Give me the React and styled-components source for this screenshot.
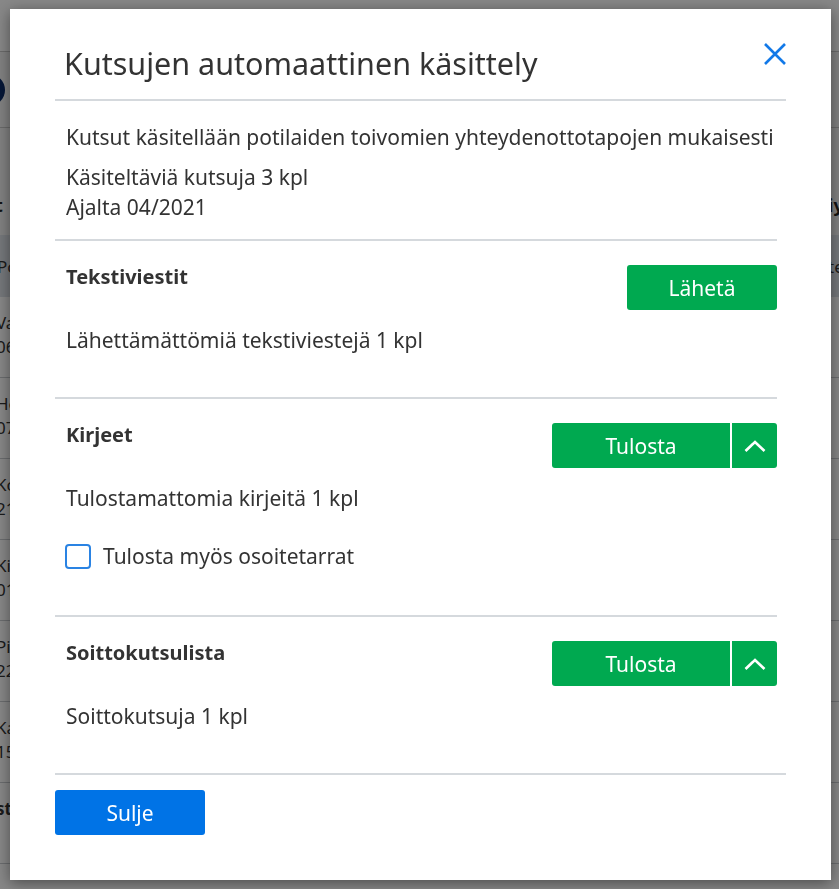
import React from "react";
import styled, { createGlobalStyle } from "styled-components";

const Global = createGlobalStyle`
  html, body { margin: 0; padding: 0; }
  body {
    font-family: "Noto Sans", "Open Sans", sans-serif;
    color: #333;
    background: #fff;
    overflow: hidden;
  }
  * { box-sizing: border-box; }
`;

/* ---------- background page (behind overlay) ---------- */
const Page = styled.div`
  width: 839px;
  height: 889px;
  overflow: hidden;
  background: #fff;
  display: flex;
  flex-direction: column;
`;
const TopBar = styled.div`
  height: 52px;
  flex: none;
  background: #fff;
  border-bottom: 1px solid #c8c8c8;
`;
const SubHeader = styled.div`
  height: 76px;
  flex: none;
  background: #f4f4f4;
  border-bottom: 1px solid #c8c8c8;
  display: flex;
  align-items: center;
`;
const Avatar = styled.div`
  width: 32px;
  height: 32px;
  border-radius: 50%;
  background: #0b2a66;
  margin-left: -27px;
`;
const TitleRow = styled.div`
  height: 107px;
  flex: none;
  background: #f4f4f4;
  display: grid;
  grid-template-columns: 828px 1fr;
  align-items: end;
  padding-bottom: 18px;
  font-weight: 700;
  font-size: 18px;
  color: #222;
`;
const Band = styled.div`
  height: 62px;
  flex: none;
  background: #dde2e8;
  display: grid;
  grid-template-columns: 828px 1fr;
  align-items: center;
  font-size: 17px;
  color: #333;
`;
const Row = styled.div`
  height: 81px;
  flex: none;
  border-bottom: 1px solid #c9ccd0;
  display: grid;
  grid-template-columns: 828px 1fr;
  padding-top: 14px;
  font-size: 17px;
  line-height: 24px;
  color: #333;
`;
const LeftCell = styled.div`
  margin-left: ${(p) => p.$shift || -4}px;
  width: 20px;
  overflow: hidden;
  white-space: nowrap;
  font-weight: ${(p) => (p.$bold ? 700 : 400)};
`;
const RightCell = styled.div`
  white-space: nowrap;
`;

/* ---------- overlay & modal ---------- */
const Overlay = styled.div`
  position: fixed;
  inset: 0;
  background: rgba(0, 0, 0, 0.47);
  display: flex;
  align-items: flex-start;
  padding: 9px 0 0 10px;
`;
const Modal = styled.div`
  width: 821px;
  background: #fff;
  box-shadow: 0 3px 14px rgba(0, 0, 0, 0.45);
  padding: 0 45px;
  display: flex;
  flex-direction: column;
`;
const Header = styled.div`
  display: flex;
  justify-content: space-between;
  align-items: flex-start;
  padding: 34px 0 16px 9px;
  border-bottom: 2px solid #d5d9dd;
`;
const Title = styled.h1`
  margin: 0;
  font-weight: 400;
  font-size: 30.5px;
  line-height: 40px;
  color: #333;
`;
const CloseBtn = styled.button`
  border: 0;
  background: none;
  padding: 0;
  width: 22px;
  height: 22px;
  display: flex;
  cursor: pointer;
`;
const Body = styled.div`
  margin-right: 9px;
  display: flex;
  flex-direction: column;
`;
const Intro = styled.div`
  padding: 21px 0 17px 11px;
  font-size: 21px;
  line-height: 30px;
  white-space: nowrap;
`;
const Para = styled.p`
  margin: 0 0 ${(p) => p.$mb || 0}px;
`;
const Section = styled.section`
  border-top: 2px solid #d5d9dd;
  padding: 24px 0 ${(p) => p.$pb || 45}px 11px;
  font-size: 21px;
`;
const SectionHead = styled.div`
  display: flex;
  justify-content: space-between;
  align-items: flex-start;
`;
const SectionTitle = styled.h2`
  margin: 0;
  font-size: 20px;
  font-weight: 700;
  line-height: 24px;
  color: #333;
`;
const Info = styled.p`
  margin: 18px 0 0;
  line-height: 24px;
`;
const GreenBtn = styled.button`
  height: 45px;
  width: ${(p) => p.$w}px;
  border: 0;
  background: #00a950;
  color: #fff;
  font-family: inherit;
  font-size: 21px;
  border-radius: ${(p) => p.$radius || "3px"};
  display: flex;
  align-items: center;
  justify-content: center;
  padding: 0;
  cursor: pointer;
`;
const Split = styled.div`
  display: flex;
  gap: 2px;
`;
const CheckRow = styled.label`
  display: flex;
  align-items: center;
  gap: 12px;
  margin-top: 33px;
  margin-left: -1px;
  line-height: 26px;
`;
const Box = styled.span`
  width: 26px;
  height: 25px;
  border: 2px solid #2a83e3;
  border-radius: 4px;
  background: #fff;
  flex: none;
`;
const Footer = styled.div`
  border-top: 2px solid #d5d9dd;
  padding: 15px 0 45px;
`;
const BlueBtn = styled.button`
  width: 150px;
  height: 45px;
  border: 0;
  border-radius: 3px;
  background: #0073e6;
  color: #fff;
  font-family: inherit;
  font-size: 21px;
  padding: 0;
  cursor: pointer;
`;

const Chevron = () => (
  <svg width="22" height="12" viewBox="0 0 22 12" fill="none">
    <path d="M1.5 11 L11 2 L20.5 11" stroke="#fff" strokeWidth="2.6" />
  </svg>
);

const CloseIcon = () => (
  <svg width="22" height="22" viewBox="0 0 22 22" fill="none">
    <path d="M1 1 L21 21 M21 1 L1 21" stroke="#1279e8" strokeWidth="2.6" />
  </svg>
);

const rows = [
  ["Valtonen Aino", "060578-1234"],
  ["Heikkinen Jari", "070481-2345"],
  ["Korhonen Liisa", "211266-3456"],
  ["Kivelä Matti", "010190-4567"],
  ["Pitkänen Sanna", "220374-5678"],
  ["Karjalainen Ilkka", "150859-6789"],
  ["stenberg", ""],
];

export default function App() {
  return (
    <>
      <Global />
      <Page>
        <TopBar />
        <SubHeader>
          <Avatar />
        </SubHeader>
        <TitleRow>
          <LeftCell $bold $shift={-5}>t</LeftCell>
          <RightCell>iy</RightCell>
        </TitleRow>
        <Band>
          <LeftCell $shift={-3}>Potilas</LeftCell>
          <RightCell>te</RightCell>
        </Band>
        {rows.map(([a, b], i) => (
          <Row key={i}>
            <LeftCell $bold={i === 6}>
              {a}
              <br />
              {b}
            </LeftCell>
            <RightCell />
          </Row>
        ))}
      </Page>
      <Overlay>
        <Modal role="dialog">
          <Header>
            <Title>Kutsujen automaattinen käsittely</Title>
            <CloseBtn aria-label="Sulje">
              <CloseIcon />
            </CloseBtn>
          </Header>
          <Body>
            <Intro>
              <Para $mb={10}>Kutsut käsitellään potilaiden toivomien yhteydenottotapojen mukaisesti</Para>
              <Para>Käsiteltäviä kutsuja 3 kpl</Para>
              <Para>Ajalta 04/2021</Para>
            </Intro>
            <Section>
              <SectionHead>
                <SectionTitle>Tekstiviestit</SectionTitle>
                <GreenBtn $w={150}>Lähetä</GreenBtn>
              </SectionHead>
              <Info>Lähettämättömiä tekstiviestejä 1 kpl</Info>
            </Section>
            <Section $pb={46}>
              <SectionHead>
                <SectionTitle>Kirjeet</SectionTitle>
                <Split>
                  <GreenBtn $w={178} $radius="3px 0 0 3px">Tulosta</GreenBtn>
                  <GreenBtn $w={45} $radius="0 3px 3px 0" aria-label="Lisää">
                    <Chevron />
                  </GreenBtn>
                </Split>
              </SectionHead>
              <Info>Tulostamattomia kirjeitä 1 kpl</Info>
              <CheckRow>
                <Box />
                Tulosta myös osoitetarrat
              </CheckRow>
            </Section>
            <Section>
              <SectionHead>
                <SectionTitle>Soittokutsulista</SectionTitle>
                <Split>
                  <GreenBtn $w={178} $radius="3px 0 0 3px">Tulosta</GreenBtn>
                  <GreenBtn $w={45} $radius="0 3px 3px 0" aria-label="Lisää">
                    <Chevron />
                  </GreenBtn>
                </Split>
              </SectionHead>
              <Info>Soittokutsuja 1 kpl</Info>
            </Section>
          </Body>
          <Footer>
            <BlueBtn>Sulje</BlueBtn>
          </Footer>
        </Modal>
      </Overlay>
    </>
  );
}
